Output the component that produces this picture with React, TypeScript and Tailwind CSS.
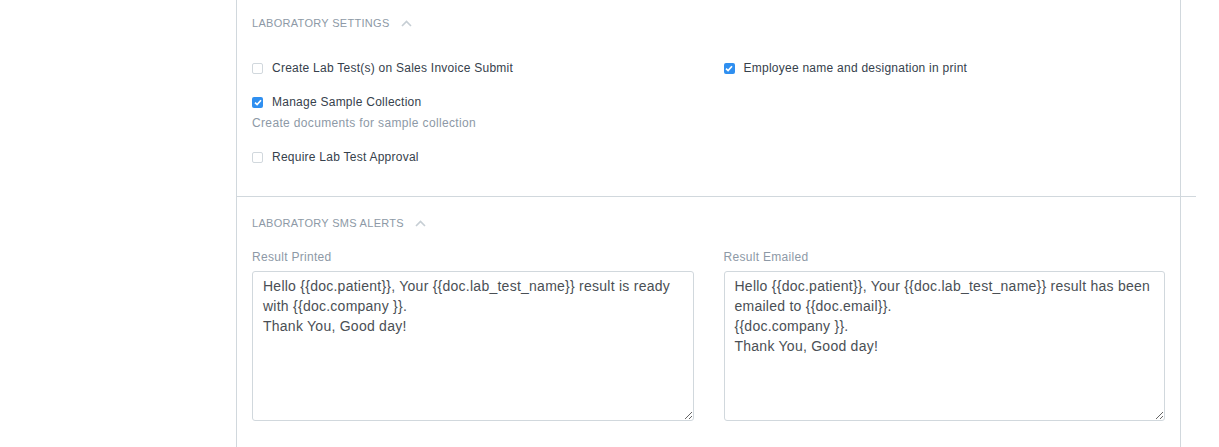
import React from "react";

const font = { fontFamily: '"Liberation Sans", Arial, sans-serif' };

const Chevron = () => (
  <svg width="11" height="7" viewBox="0 0 11 7" className="ml-[11px]">
    <path d="M1 6 L5.5 1.5 L10 6" fill="none" stroke="#c6ced4" strokeWidth="1.6" />
  </svg>
);

const Check = ({ checked, label }: { checked?: boolean; label: string }) => (
  <div className="flex h-5 items-center">
    {checked ? (
      <span className="flex h-[11px] w-[11px] items-center justify-center rounded-[2px] bg-[#2f8ff0]">
        <svg width="8" height="7" viewBox="0 0 8 7">
          <path d="M1 3.6 L3.1 5.6 L7 1.3" fill="none" stroke="#fff" strokeWidth="1.7" />
        </svg>
      </span>
    ) : (
      <span className="h-[11px] w-[11px] rounded-[2px] border border-[#d1d8dd] bg-white" />
    )}
    <span className="ml-[9px] text-[12px] tracking-[0.25px] text-[#36414c]">{label}</span>
  </div>
);

const Heading = ({ text }: { text: string }) => (
  <div className="flex h-4 items-center">
    <span className="text-[11px] uppercase tracking-[0.3px] text-[#8d99a6]">{text}</span>
    <Chevron />
  </div>
);

const Area = ({ label, value }: { label: string; value: string }) => (
  <div className="flex flex-col">
    <div className="h-4 text-[12px] leading-4 tracking-[0.3px] text-[#8d99a6]">{label}</div>
    <textarea
      readOnly
      defaultValue={value}
      style={font}
      className="mt-[6px] h-[150px] w-full rounded-[3px] border border-[#d1d8dd] bg-white px-[10px] pt-[4px] text-[14px] leading-[20px] tracking-[0.25px] text-[#4a4f55] outline-none"
    />
  </div>
);

export default function App() {
  return (
    <div className="h-[447px] w-[1219px] overflow-hidden bg-white" style={font}>
      <div className="ml-[236px] w-[960px] border-l border-[#d1d8dd]">
        <div className="w-[944px] border-r border-[#d1d8dd] px-[15px] pb-[29px] pt-[15px]">
          <Heading text="Laboratory Settings" />
          <div className="mt-[27px] grid grid-cols-2 gap-x-[30px]">
            <div className="flex flex-col">
              <Check label="Create Lab Test(s) on Sales Invoice Submit" />
              <div className="mt-[14px]">
                <Check checked label="Manage Sample Collection" />
              </div>
              <div className="mt-[3px] h-4 text-[12px] leading-4 tracking-[0.35px] text-[#8d99a6]">
                Create documents for sample collection
              </div>
              <div className="mt-[16px]">
                <Check label="Require Lab Test Approval" />
              </div>
            </div>
            <div>
              <Check checked label="Employee name and designation in print" />
            </div>
          </div>
        </div>
        <div className="border-t border-[#d1d8dd]">
          <div className="h-[300px] w-[944px] border-r border-[#d1d8dd] px-[15px] pt-[18px]">
            <Heading text="Laboratory SMS Alerts" />
            <div className="mt-[18px] grid grid-cols-2 gap-x-[30px]">
              <Area
                label="Result Printed"
                value={"Hello {{doc.patient}}, Your {{doc.lab_test_name}} result is ready with {{doc.company }}.\nThank You, Good day!"}
              />
              <Area
                label="Result Emailed"
                value={"Hello {{doc.patient}}, Your {{doc.lab_test_name}} result has been emailed to {{doc.email}}.\n{{doc.company }}.\nThank You, Good day!"}
              />
            </div>
          </div>
        </div>
      </div>
    </div>
  );
}
